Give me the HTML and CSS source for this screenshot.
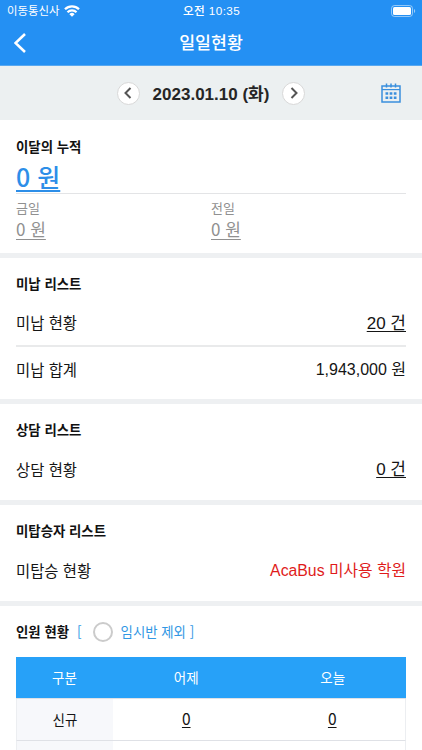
FILE: index.html
```html
<!DOCTYPE html>
<html lang="ko">
  <head>
    <meta charset="utf-8">
    <title>일일현황</title>
    <link rel="stylesheet" href="styles.css">
  </head>
  <body>
    <header class="header">
      <div class="status-bar">
        <div class="carrier">
          <span>이동통신사</span>
          <svg class="wifi" width="16" height="12" viewBox="0 0 16 12" fill="none" stroke="#fff" stroke-width="2.3">
            <path d="M1 4.3a10 10 0 0 1 14 0M3.5 7.2a6.4 6.4 0 0 1 9 0" />
            <path d="M8 11.8L5.4 9.2a3.6 3.6 0 0 1 5.2 0z" fill="#fff" stroke="none" />
          </svg>
        </div>
        <div class="clock">오전 10:35</div>
        <svg class="battery" width="25" height="12" viewBox="0 0 25 12">
          <rect x="0.5" y="0.5" width="21" height="11" rx="3" fill="none" stroke="#fff" stroke-opacity="0.5" />
          <rect x="2" y="2" width="18" height="8" rx="1.5" fill="#fff" />
          <path d="M23 4v4c1.6-.7 1.6-3.3 0-4z" fill="#fff" fill-opacity="0.55" />
        </svg>
      </div>
      <div class="nav-bar">
        <svg class="back" width="12" height="20" viewBox="0 0 12 20" fill="none" stroke="#fff" stroke-width="2.6">
          <path d="M11 1L1.5 10l9.5 9" />
        </svg>
        <h1>일일현황</h1>
      </div>
    </header>

    <div class="date-bar">
      <div class="date-picker">
        <button class="round-button">
          <svg width="8" height="12" viewBox="0 0 8 12" fill="none" stroke="#555" stroke-width="2"><path d="M6.5 1L1.5 6l5 5" /></svg>
        </button>
        <span class="date">2023.01.10 (화)</span>
        <button class="round-button">
          <svg width="8" height="12" viewBox="0 0 8 12" fill="none" stroke="#555" stroke-width="2"><path d="M1.5 1l5 5-5 5" /></svg>
        </button>
      </div>
      <svg class="calendar" width="20" height="20" viewBox="0 0 20 20" fill="none" stroke="#3a8fdd">
        <path d="M1 3h18v16H1z" stroke-width="1.5" />
        <path d="M1 6.6h18" stroke-width="1.2" />
        <path d="M5.5 .5v4M10 .5v4M14.5 .5v4" stroke-width="1.5" />
        <path d="M4.5 10.5h11M4.5 14.8h11" stroke-width="2.5" stroke-dasharray="2.7 1.45" />
      </svg>
    </div>

    <section class="total">
      <h2>이달의 누적</h2>
      <div class="total-price"><a>0 원</a></div>
      <div class="days">
        <div class="day">
          <p>금일</p>
          <a>0 원</a>
        </div>
        <div class="day">
          <p>전일</p>
          <a>0 원</a>
        </div>
      </div>
    </section>

    <section class="unpaid">
      <h2>미납 리스트</h2>
      <div class="row line">
        <span>미납 현황</span>
        <a class="value link">20 건</a>
      </div>
      <div class="row">
        <span>미납 합계</span>
        <span class="value price">1,943,000 원</span>
      </div>
    </section>

    <section class="consult">
      <h2>상담 리스트</h2>
      <div class="row">
        <span>상담 현황</span>
        <a class="value link">0 건</a>
      </div>
    </section>

    <section class="bus">
      <h2>미탑승자 리스트</h2>
      <div class="row">
        <span>미탑승 현황</span>
        <span class="value red">AcaBus 미사용 학원</span>
      </div>
    </section>

    <section class="people">
      <div class="people-title">
        <h2>인원 현황</h2>
        <span class="bracket">[</span>
        <span class="radio"></span>
        <span class="except">임시반 제외 ]</span>
      </div>
      <table>
        <tr>
          <th class="kind">구분</th>
          <th>어제</th>
          <th>오늘</th>
        </tr>
        <tr>
          <td class="kind">신규</td>
          <td><a>0</a></td>
          <td><a>0</a></td>
        </tr>
        <tr>
          <td class="kind"></td>
          <td></td>
          <td></td>
        </tr>
      </table>
    </section>
  </body>
</html>
```

FILE: styles.css
```css
* {
  box-sizing: border-box;
}

body {
  margin: 0;
  height: 750px;
  overflow: hidden;
  background-color: #fff;
  color: #151515;
  font-family: "Noto Sans CJK KR", sans-serif;
  font-size: 15.4px;
}

h1, h2, p {
  margin: 0;
}

.header {
  height: 66px;
  background-color: #2490f3;
  border-bottom: 1px solid #58a8f0;
  color: #fff;
}

.status-bar {
  display: grid;
  grid-template-columns: 1fr auto 1fr;
  align-items: center;
  height: 21px;
  padding: 0 6px 0 7px;
  line-height: 21px;
}

.carrier {
  display: flex;
  align-items: center;
  gap: 5px;
  font-size: 11.4px;
}

.clock {
  padding-top: 1px;
  font-family: "Liberation Sans", "Noto Sans CJK KR", sans-serif;
  font-size: 11.7px;
  font-weight: 500;
  line-height: 20px;
  letter-spacing: 0.4px;
}

.battery {
  justify-self: end;
}

.nav-bar {
  display: grid;
  grid-template-columns: 1fr auto 1fr;
  align-items: center;
  height: 44px;
  padding: 0 14px;
}

.nav-bar h1 {
  font-size: 17.3px;
  font-weight: 500;
  line-height: 42px;
  padding-bottom: 2px;
}

.date-bar {
  display: grid;
  grid-template-columns: 1fr auto 1fr;
  align-items: center;
  height: 54px;
  padding: 0 21px;
  background-color: #ecf0f1;
}

.date-picker {
  grid-column: 2;
  display: flex;
  align-items: center;
  gap: 13px;
}

.round-button {
  display: flex;
  align-items: center;
  justify-content: center;
  width: 23px;
  height: 23px;
  padding: 0;
  border: 1px solid #d8d8d8;
  border-radius: 50%;
  background-color: #fff;
}

.date {
  padding-top: 3px;
  font-family: "Liberation Sans", "Noto Sans CJK KR", sans-serif;
  font-size: 17px;
  font-weight: bold;
  line-height: 24px;
  color: #252525;
}

.calendar {
  justify-self: end;
}

section {
  padding: 0 16px;
  border-bottom: 5px solid #eef0f2;
}

h2 {
  font-size: 13.4px;
  font-weight: 700;
  line-height: 20px;
  color: #111;
}

.total {
  height: 138px;
  padding-top: 16px;
}

.total-price {
  height: 38px;
  border-bottom: 1px solid #e3e4e6;
  color: #2d8ee8;
  font-size: 25px;
  font-weight: 500;
  line-height: 40px;
}

.total-price a {
  text-decoration: underline;
  text-decoration-thickness: 2px;
  text-underline-offset: 3px;
}

.days {
  display: flex;
  padding-top: 4px;
  color: #909090;
}

.day {
  width: 50%;
}

.day p {
  font-size: 13px;
  line-height: 20px;
}

.day a {
  display: block;
  font-size: 17px;
  line-height: 22px;
  text-decoration: underline;
  text-decoration-thickness: 1px;
  text-underline-offset: 3px;
}

.unpaid {
  height: 146px;
  padding-top: 15px;
}

.row {
  display: flex;
  align-items: center;
  justify-content: space-between;
  height: 43px;
}

.row.line {
  height: 54px;
  padding-top: 6px;
  border-bottom: 2px solid #e9eaeb;
}

.value {
  padding-bottom: 1px;
  font-family: "Liberation Sans", "Noto Sans CJK KR", sans-serif;
  font-size: 16px;
}

.link {
  padding-bottom: 2px;
  font-size: 17px;
  text-decoration: underline;
  text-decoration-thickness: 1px;
  text-underline-offset: 2px;
}

.red {
  color: #e01b1b;
  font-size: 15.8px;
}

.consult,
.bus {
  height: 101px;
  padding-top: 15px;
}

.consult .row,
.bus .row {
  height: 59px;
}

.people {
  border-bottom: 0;
}

.people-title {
  display: flex;
  align-items: center;
  height: 51px;
  color: #3197e4;
  font-size: 13.4px;
}

.people-title h2,
.bracket,
.except {
  padding-bottom: 2px;
}

.bracket {
  margin-left: 8px;
}

.radio {
  width: 20px;
  height: 20px;
  margin: 0 8px 0 11px;
  border: 2px solid #cbcbcb;
  border-radius: 50%;
}

table {
  width: 100%;
  table-layout: fixed;
  border-collapse: separate;
  border-spacing: 0;
  font-size: 13.5px;
  line-height: 20px;
}

th,
td {
  height: 42px;
  padding: 0 0 2px;
  border-bottom: 1px solid #dfe1e6;
  text-align: center;
}

th {
  background-color: #27a1f8;
  color: #fff;
  font-weight: 400;
}

td:last-child {
  border-right: 1px solid #eceef1;
}

.kind {
  width: 97px;
}

td.kind {
  background-color: #f7f8fb;
  border-left: 1px solid #eceef1;
}

td a {
  font-size: 15.5px;
  text-decoration: underline;
  text-decoration-thickness: 1px;
  text-underline-offset: 2px;
}
```
